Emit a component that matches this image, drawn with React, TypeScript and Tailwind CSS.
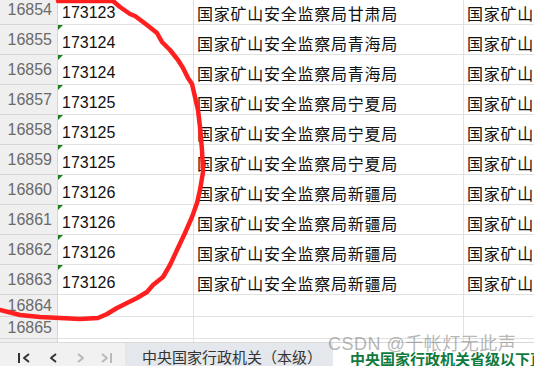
import React from 'react'

interface Row {
  num: number
  code?: string
  org?: string
  mark?: boolean
  height: string
}

const ORG = '国家矿山安全监察局'

const rows: Row[] = [
  { num: 16854, code: '173123', org: ORG + '甘肃局', height: 'h-[30px]' },
  { num: 16855, code: '173124', org: ORG + '青海局', mark: true, height: 'h-[30px]' },
  { num: 16856, code: '173124', org: ORG + '青海局', mark: true, height: 'h-[30px]' },
  { num: 16857, code: '173125', org: ORG + '宁夏局', mark: true, height: 'h-[30px]' },
  { num: 16858, code: '173125', org: ORG + '宁夏局', mark: true, height: 'h-[30px]' },
  { num: 16859, code: '173125', org: ORG + '宁夏局', mark: true, height: 'h-[30px]' },
  { num: 16860, code: '173126', org: ORG + '新疆局', mark: true, height: 'h-[30px]' },
  { num: 16861, code: '173126', org: ORG + '新疆局', mark: true, height: 'h-[30px]' },
  { num: 16862, code: '173126', org: ORG + '新疆局', mark: true, height: 'h-[30px]' },
  { num: 16863, code: '173126', org: ORG + '新疆局', mark: true, height: 'h-[30px]' },
  { num: 16864, height: 'h-[22px]' },
  { num: 16865, height: 'h-[22px]' },
  { num: 16866, height: 'h-[22px]' },
]

const latin = "font-['Liberation_Sans','Noto_Sans_CJK_SC',sans-serif]"
const cjk = "font-['Noto_Sans_CJK_SC',sans-serif]"

function SheetRow({ row }: { row: Row }) {
  return (
    <div className={`flex shrink-0 ${row.height}`}>
      {/* row header */}
      <div
        className={`w-[58px] shrink-0 flex items-center justify-end pr-[5px] bg-[#efefef] border-r border-b border-[#d6d6d6] text-[16px] text-[#6a6a6a] ${latin}`}
      >
        {row.num}
      </div>

      {/* column B */}
      <div
        className={`relative w-[136px] shrink-0 flex items-end pl-[4px] pb-[2px] border-r border-b border-[#e1e1e1] text-[16px] leading-[18px] text-[#111111] ${latin}`}
      >
        {row.mark && (
          <svg className="absolute left-0 top-0" width="5" height="5" viewBox="0 0 5 5">
            <polygon points="0,0 5,0 0,5" fill="#1a7f1a" />
          </svg>
        )}
        {row.code}
      </div>

      {/* column C */}
      <div
        className={`w-[270px] shrink-0 flex items-end pl-[3px] pb-[1px] border-r border-b border-[#e1e1e1] text-[16px] leading-[20px] tracking-[0.75px] text-[#111111] whitespace-nowrap ${cjk}`}
      >
        {row.org}
      </div>

      {/* column D */}
      <div
        className={`flex-1 min-w-0 overflow-hidden flex items-end pl-[3px] pb-[1px] border-b border-[#e1e1e1] text-[16px] leading-[20px] tracking-[0.75px] text-[#111111] whitespace-nowrap ${cjk}`}
      >
        {row.org}
      </div>
    </div>
  )
}

function NavIcon({ dir, bar, disabled }: { dir: 'left' | 'right'; bar?: boolean; disabled?: boolean }) {
  const color = disabled ? '#b9b9b9' : '#333333'
  const chevron = dir === 'left' ? 'M8 1 L3 5 L8 9' : 'M2 1 L7 5 L2 9'
  return (
    <svg width={bar ? 13 : 10} height="10" viewBox={bar ? '0 0 13 10' : '0 0 10 10'} fill="none">
      {bar && dir === 'left' && <line x1="1" y1="0" x2="1" y2="10" stroke={color} strokeWidth="2" />}
      <path
        d={bar && dir === 'left' ? 'M11 1 L6 5 L11 9' : chevron}
        stroke={color}
        strokeWidth="2"
        strokeLinejoin="round"
      />
      {bar && dir === 'right' && <line x1="11" y1="0" x2="11" y2="10" stroke={color} strokeWidth="2" />}
    </svg>
  )
}

export default function App() {
  return (
    <div className="relative w-[534px] h-[366px] overflow-hidden bg-white flex flex-col">
      {/* grid */}
      <div className="flex-1 min-h-0 overflow-hidden">
        <div className="-mt-[5px] flex flex-col">
          {rows.map((row) => (
            <SheetRow key={row.num} row={row} />
          ))}
        </div>
      </div>

      {/* sheet tabs */}
      <div className="h-[24px] shrink-0 flex bg-[#f1f1f1] border-t border-[#d9d9d9]">
        <div className="w-[125px] shrink-0 flex items-start pt-[10px] pl-[18px]">
          <NavIcon dir="left" bar />
          <div className="ml-[17px]">
            <NavIcon dir="left" />
          </div>
          <div className="ml-[18px]">
            <NavIcon dir="right" disabled />
          </div>
          <div className="ml-[14px]">
            <NavIcon dir="right" bar disabled />
          </div>
        </div>
        <div
          className={`w-[208px] shrink-0 pl-[17px] pt-[4px] bg-[#e4e7eb] text-[15px] leading-[20px] text-[#333333] whitespace-nowrap ${cjk}`}
        >
          中央国家行政机关（本级）
        </div>
        <div
          className={`flex-1 min-w-0 overflow-hidden pl-[17px] pt-[6px] bg-white text-[15px] leading-[20px] font-bold text-[#117a3e] whitespace-nowrap ${cjk}`}
        >
          中央国家行政机关省级以下直属机构
        </div>
      </div>

      {/* red hand-drawn annotation */}
      <svg
        className="pointer-events-none absolute inset-0"
        width="534"
        height="366"
        viewBox="0 0 534 366"
        fill="none"
      >
        <polyline
          points="58,1 113,1 120,7 130,14 135,16 147,25 157,33 162,42 170,50 178,60 183,68 188,78 192,84 195,97 198,110 200,127 202,150 203,172 200,190 197,203 192,217 185,233 177,250 170,265 163,277 153,285 147,292 137,298 127,303 117,308 107,314 98,318 80,319 40,317 20,315 0,310"
          stroke="#ff1f1f"
          strokeWidth="4.5"
          strokeLinejoin="round"
          strokeLinecap="round"
        />
      </svg>

      {/* watermark */}
      <div
        className={`pointer-events-none absolute left-[328px] top-[333px] text-[18px] leading-[22px] tracking-[0.5px] text-[rgba(120,120,120,0.55)] whitespace-nowrap ${latin}`}
      >
        CSDN @千帐灯无此声
      </div>
    </div>
  )
}
